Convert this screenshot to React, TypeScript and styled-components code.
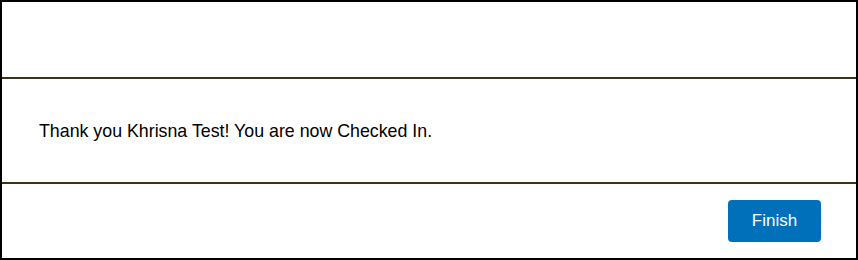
import styled, { createGlobalStyle } from 'styled-components';

const GlobalStyle = createGlobalStyle`
  html, body {
    margin: 0;
    padding: 0;
    background: #ffffff;
  }
  body {
    font-family: 'Liberation Sans', Arial, sans-serif;
  }
`;

const Modal = styled.div`
  box-sizing: border-box;
  width: 858px;
  height: 260px;
  border: 2px solid #000000;
  display: flex;
  flex-direction: column;
  background: #ffffff;
`;

const Header = styled.div`
  height: 75px;
  border-bottom: 2px solid #3b3218;
`;

const Body = styled.div`
  height: 103px;
  border-bottom: 2px solid #3b3218;
  display: flex;
  align-items: center;
  padding-left: 37px;
`;

const Message = styled.p`
  margin: 0;
  font-size: 17.8px;
  line-height: 20px;
  color: #000000;
`;

const Footer = styled.div`
  flex: 1;
  display: flex;
  align-items: center;
  justify-content: flex-end;
  padding-right: 35px;
`;

const FinishButton = styled.button`
  width: 93px;
  height: 42px;
  border: none;
  border-radius: 4px;
  background: #0070ba;
  color: #ffffff;
  font-family: 'Liberation Sans', Arial, sans-serif;
  font-size: 17px;
  cursor: pointer;
`;

export default function App() {
  return (
    <>
      <GlobalStyle />
      <Modal>
        <Header />
        <Body>
          <Message>Thank you Khrisna Test! You are now Checked In.</Message>
        </Body>
        <Footer>
          <FinishButton type="button">Finish</FinishButton>
        </Footer>
      </Modal>
    </>
  );
}
